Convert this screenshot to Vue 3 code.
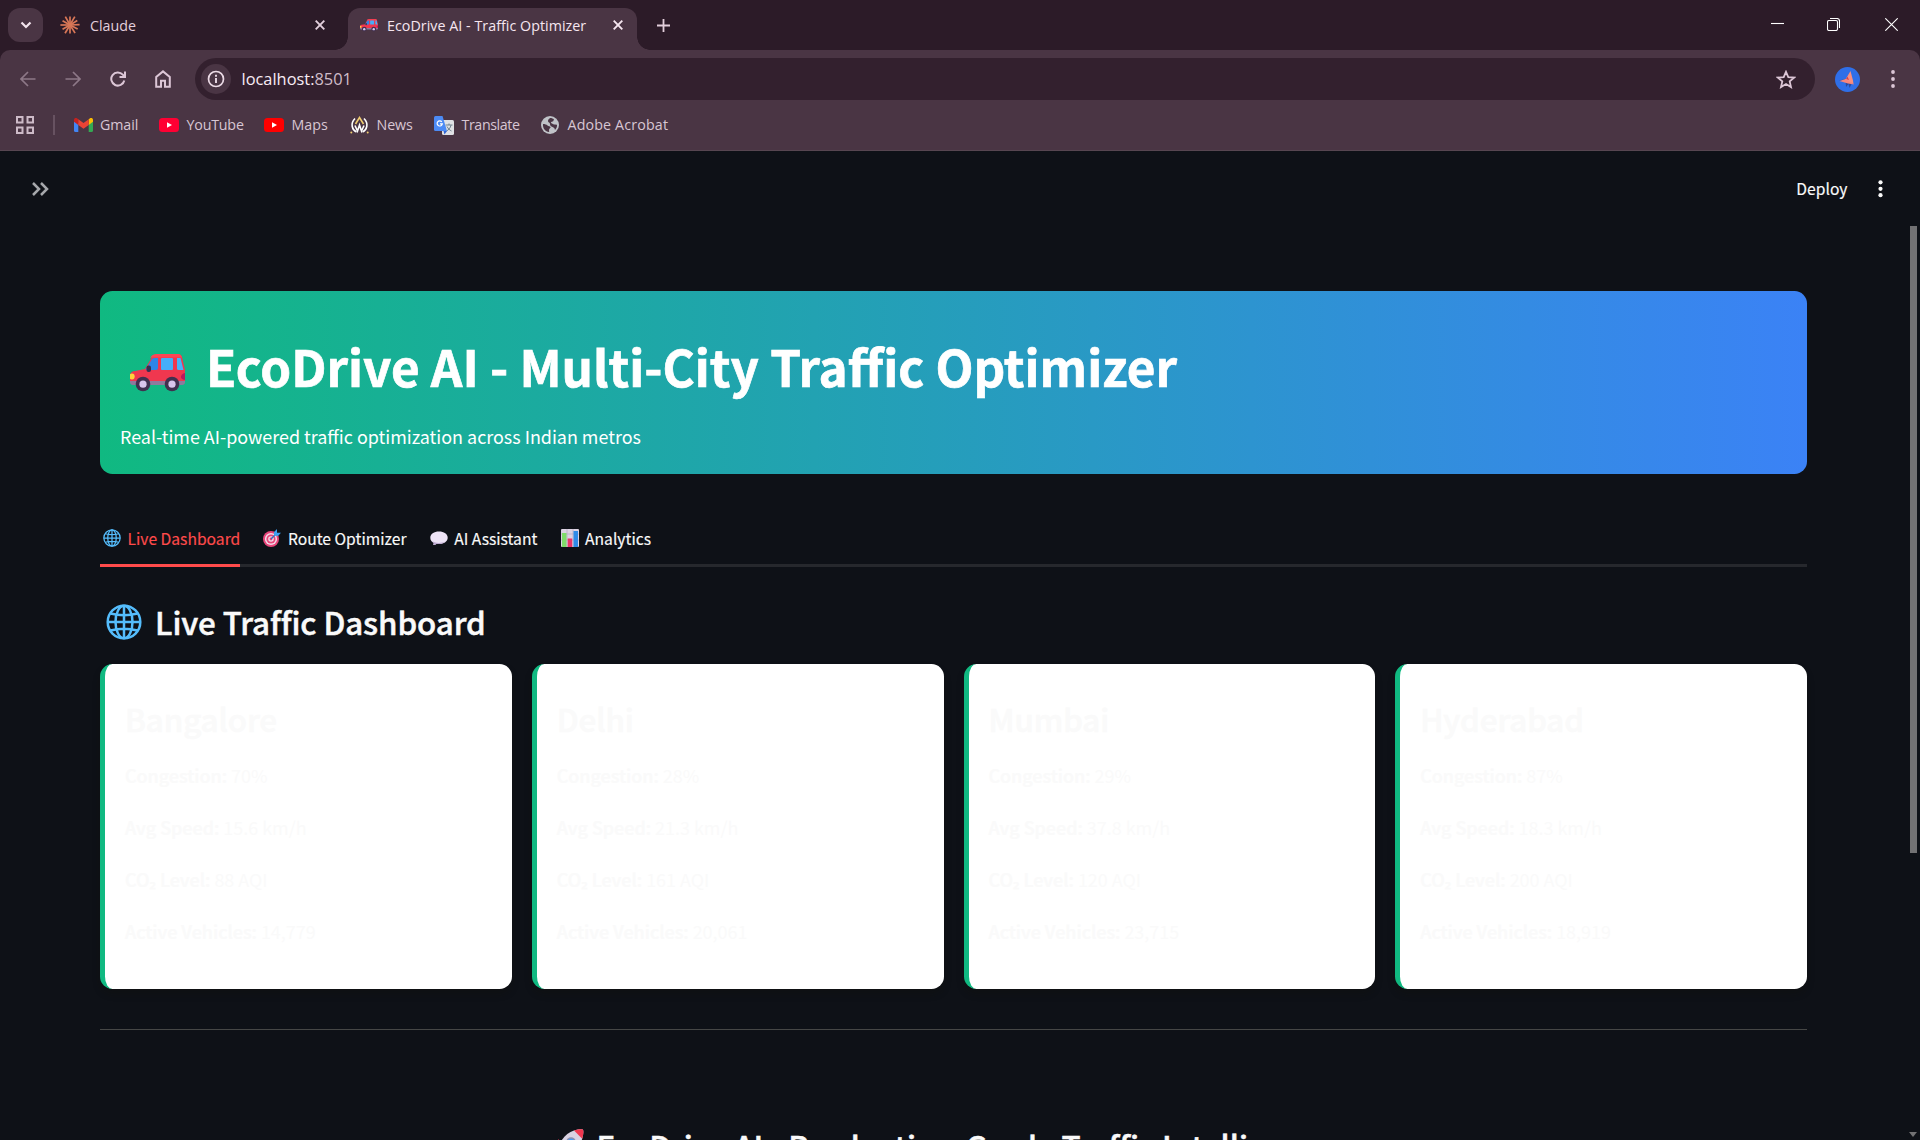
<script setup>
import { h } from 'vue'

const cities = [
  { name: 'Bangalore', congestion: '70%', speed: '15.6 km/h', co2: '88 AQI', vehicles: '14,779' },
  { name: 'Delhi', congestion: '28%', speed: '21.3 km/h', co2: '161 AQI', vehicles: '20,061' },
  { name: 'Mumbai', congestion: '29%', speed: '37.8 km/h', co2: '120 AQI', vehicles: '23,715' },
  { name: 'Hyderabad', congestion: '87%', speed: '18.3 km/h', co2: '200 AQI', vehicles: '18,919' },
]

// Shared emoji-style glyphs used at several sizes
const CarIcon = () =>
  h('svg', { viewBox: '0 0 55 38' }, [
    h('path', { d: 'M5 17 L15 15 L22 3 Q24 0 28 0 H48 Q51 0 52 3 L55 16 V27 H0 V21 Q1 17 5 17Z', fill: '#f0374f' }),
    h('path', { d: 'M20 4 Q22 0 27 0 H48 Q51 0 52 3.500 H21Z', fill: '#ff4455' }),
    h('path', { d: 'M15.500 16 L22 5 Q23 4 25 4 H28 V14 Q28 16 26 16Z', fill: '#2f86e6' }),
    h('rect', { x: 31, y: 4, width: 12, height: 12, rx: 1, fill: '#45aefa' }),
    h('path', { d: 'M47 4 H50.500 L53.500 16 H48.500 Q47 16 47 14.500Z', fill: '#45b4fa' }),
    h('rect', { x: 16.500, y: 11.500, width: 4.500, height: 6.500, rx: 2, fill: '#35304f' }),
    h('path', { d: 'M0 27 H55 V28 Q55 31 52 31 H3 Q0 31 0 28Z', fill: '#8e7a9d' }),
    h('ellipse', { cx: 2, cy: 22.500, rx: 2.700, ry: 3, fill: '#ffd23c' }),
    h('path', { d: 'M55 19 V26 Q50.500 25 51 22.500 Q51.500 19.500 55 19Z', fill: '#b81a5e' }),
    ...[13, 42].flatMap((cx) => [
      h('circle', { cx, cy: 30, r: 7.300, fill: '#41304f' }),
      h('circle', { cx, cy: 30.200, r: 3.600, fill: '#d9c6ec' }),
    ]),
  ])

const GlobeIcon = () =>
  h('svg', { viewBox: '0 0 36 36', fill: 'none', stroke: '#55bdfc', 'stroke-width': 2.5 }, [
    h('circle', { cx: 18, cy: 18, r: 16.300 }),
    h('ellipse', { cx: 18, cy: 18, rx: 8.500, ry: 16.300 }),
    h('path', { d: 'M18 1.500 V34.500 M1.500 18 H34.500 M4.500 9.500 Q18 13 31.500 9.500 M4.500 26.500 Q18 23 31.500 26.500' }),
  ])

const rays = [0, 30, 58, 88, 117, 148, 180, 211, 240, 270, 300, 331]
</script>

<template>
  <div class="window">
    <header class="tabstrip">
      <button class="tab-search">
        <svg width="12" height="8" viewBox="0 0 12 8"><path d="M1.500 1.500 6 6l4.500-4.500" /></svg>
      </button>
      <div class="tab idle">
        <svg class="claude" viewBox="-10 -10 20 20">
          <path v-for="(r, i) in rays" :key="r" :transform="`rotate(${r})`" :d="i % 2 ? 'M0 0V-9.600' : 'M0 0V-8.600'" />
        </svg>
        <span>Claude</span>
        <svg class="x" viewBox="0 0 10 10"><path d="M.7.7l8.600 8.600M9.300.7.7 9.300" /></svg>
      </div>
      <div class="tab active">
        <CarIcon class="fav-car" />
        <span>EcoDrive AI - Traffic Optimizer</span>
        <svg class="x" viewBox="0 0 10 10"><path d="M.7.7l8.600 8.600M9.300.7.7 9.300" /></svg>
      </div>
      <svg class="plus" viewBox="0 0 13 13"><path d="M6.500 0v13M0 6.500h13" /></svg>
      <div class="controls">
        <svg viewBox="0 0 13 13"><path d="M0 5.500h13" /></svg>
        <svg viewBox="0 0 13 13"><rect x=".5" y="2.500" width="10" height="10" rx="1.500" /><path d="M3 .5h7a2.500 2.500 0 0 1 2.500 2.500v7" /></svg>
        <svg viewBox="0 0 13 13"><path d="M.3.3l12.400 12.400M12.700.3.3 12.700" /></svg>
      </div>
    </header>

    <div class="chrome">
      <div class="toolbar">
        <svg class="nav dim" viewBox="0 0 16 16"><path d="M15.500 8H1.500M8 1 1 8l7 7" /></svg>
        <svg class="nav dim" viewBox="0 0 16 16"><path d="M.5 8h14M8 1l7 7-7 7" /></svg>
        <svg class="nav" viewBox="0 0 16 16"><path d="M14.300 9.500A6.600 6.600 0 1 1 12.800 3.600L14.500 5.600M15 .6v5.400H9.500" /></svg>
        <svg class="nav home" viewBox="0 0 16 18"><path d="M1.200 16.800V7L8 1.400 14.800 7v9.800H10v-6H6v6z" /></svg>
        <div class="omnibox">
          <div class="info">
            <svg width="18" height="18" viewBox="0 0 18 18"><circle cx="9" cy="9" r="7.500" /><path d="M9 8v5M9 4.800v1.900" /></svg>
          </div>
          <span class="url"><b>localhost:</b>8501</span>
          <svg class="star" viewBox="0 0 20 19"><path d="M10 1.800l2.300 5.300 5.800.5-4.400 3.800 1.300 5.700-5-3-5 3 1.300-5.700L1.900 7.600l5.800-.5z" /></svg>
        </div>
        <svg class="avatar" viewBox="0 0 25 25">
          <circle cx="12.500" cy="12.500" r="12.500" fill="#2f6fe8" />
          <path d="M4 13.500 10.500 12 11 20 13.500 17 14.500 21 17 16z" fill="#2c4a9c" />
          <path d="M4.500 14 12 11.500 19 17.500 13 16.500z" fill="#f7857a" />
          <path d="M15.500 4 18 13.500 18.500 17 10.500 12.500z" fill="#f88f80" />
          <path d="M12.500 9.500 14 13 11 12z" fill="#d3404e" />
        </svg>
        <svg class="dots" viewBox="0 0 4 18"><circle cx="2" cy="2" r="1.900" /><circle cx="2" cy="9" r="1.900" /><circle cx="2" cy="16" r="1.900" /></svg>
      </div>

      <nav class="bookmarks">
        <svg class="apps" viewBox="0 0 18 18"><path d="M1 1h5.500v5.500H1zM11.500 1H17v5.500h-5.500zM1 11.500h5.500V17H1zM11.500 11.500H17V17h-5.500z" /></svg>
        <i class="sep"></i>
        <a class="bm gmail">
          <svg width="19" height="14" viewBox="0 0 19 14">
            <path d="M0 2v10.500Q0 14 1.500 14H4.300V5z" fill="#4285f4" /><path d="M19 2v10.500q0 1.500-1.500 1.500h-2.800V5z" fill="#34a853" />
            <path d="M14.700 1.200V7L19 3.800V2c0-2-2-2.500-3.300-1.500z" fill="#fbbc04" /><path d="M0 2v1.800L4.300 7V1.200L3.300.5C2-.5 0 0 0 2z" fill="#c5221f" />
            <path d="M4.300 1.200 9.500 5l5.200-3.800V7L9.500 10.800 4.300 7z" fill="#ea4335" />
          </svg><span>Gmail</span>
        </a>
        <a class="bm youtube">
          <svg width="20" height="14" viewBox="0 0 20 14"><rect width="20" height="14" rx="3.500" fill="#ff0033" /><path d="M8 4.200v5.600L13 7z" fill="#fff" /></svg><span>YouTube</span>
        </a>
        <a class="bm maps">
          <svg width="20" height="14" viewBox="0 0 20 14"><rect width="20" height="14" rx="3.500" fill="#ff0000" /><path d="M8 4.200v5.600L13 7z" fill="#fff" /></svg><span>Maps</span>
        </a>
        <a class="bm news">
          <svg width="19" height="18" viewBox="0 0 19 18" fill="none" stroke-width="1.600">
            <path d="M5 2.500C0 7.500 2 14 6.500 16M14 2.500C19 7.500 17 14 12.500 16" stroke="#fff" />
            <path d="M5 9.500l2.500 5.500L9.500 9l2 6L14 9.500" stroke="#fff" /><path d="M5.500 8 9.500 1.500l4 6.500" stroke="#f0cc70" />
            <circle cx="1.300" cy="16.500" r="1" fill="#f0cc70" /><circle cx="17.700" cy="16.500" r="1" fill="#f0cc70" />
          </svg><span>News</span>
        </a>
        <a class="bm translate">
          <svg width="20" height="19" viewBox="0 0 20 19">
            <rect x="8" y="4" width="12" height="15" rx="1.500" fill="#dfe1e5" />
            <path d="M11.500 9h7M15 7.500V9M17 9c-.5 3-2.500 5-4.500 6M13 10.500c1 2 2.500 3.500 4.500 4.500" fill="none" stroke="#71838f" />
            <path d="M1.500 0H8.500L13 15H1.500Q0 15 0 13.500V1.500Q0 0 1.500 0z" fill="#4c8bf5" /><path d="M9.500 15H13l-2.500 3.500z" fill="#3367d6" />
            <path d="M7.800 5.800A2.600 2.600 0 1 0 8.300 7.800H6" fill="none" stroke="#fff" stroke-width="1.200" />
          </svg><span>Translate</span>
        </a>
        <a class="bm adobe">
          <svg width="18" height="18" viewBox="0 0 18 18">
            <circle cx="9" cy="9" r="9" fill="#c0c3c8" />
            <path d="M2 8c2 0 3.500.5 4.500 1.500S9 10 9.500 11s-1.500 1.500-1.500 3 .5 1.500 0 2C4.500 15.500 1.500 12.500 2 8zM9 2c2 0 3 .5 4 1.500l-1 2c-1.500 0-2 .5-2 1.500l3 1.500c1.500 0 2.500.5 3 0 .3 2-.5 4-2 5.500-.5-2-1-2.500-2.500-3S9 9.500 9 8 7 6.500 7 5s1-2 2-3z" fill="#4a3544" />
          </svg><span>Adobe Acrobat</span>
        </a>
      </nav>
    </div>

    <div class="app">
      <div class="app-header">
        <svg class="expand" viewBox="0 0 18 14"><path d="M2 1l6 6-6 6M10 1l6 6-6 6" /></svg>
        <span class="deploy">Deploy</span>
        <svg class="kebab" viewBox="0 0 5 18"><circle cx="2.500" cy="2.300" r="2.100" /><circle cx="2.500" cy="8.800" r="2.100" /><circle cx="2.500" cy="15.200" r="2.100" /></svg>
      </div>

      <main>
        <section class="banner">
          <h1><CarIcon class="big-car" /><span>EcoDrive AI - Multi-City Traffic Optimizer</span></h1>
          <p>Real-time AI-powered traffic optimization across Indian metros</p>
        </section>

        <div class="tabs">
          <div class="item on"><GlobeIcon class="emo" /><span>Live Dashboard</span></div>
          <div class="item">
            <svg class="emo" viewBox="0 0 18 18">
              <circle cx="8" cy="10" r="8" fill="#e8457a" /><circle cx="8" cy="10" r="6.100" fill="#f3dbe8" /><circle cx="8" cy="10" r="4.600" fill="#e8457a" /><circle cx="8" cy="10" r="2.800" fill="#f3dbe8" /><circle cx="8" cy="10" r="1.400" fill="#e8457a" />
              <path d="M8 10l5-5" stroke="#2b6fc0" stroke-width="1.300" /><path d="M11 6.500V3l3-3v3.800H18L15 7z" fill="#3b9ff0" />
            </svg><span>Route Optimizer</span>
          </div>
          <div class="item">
            <svg class="emo" viewBox="0 0 18 18"><path d="M9 2.500c5 0 8.700 2.500 8.700 6.200S14 15 9 15c-.8 0-1.600 0-2.300-.2C5.800 15.800 4.500 16 3.200 16c.5-.6.6-1.500.4-2.200C1.600 12.800.3 11 .3 8.700.3 5 4 2.500 9 2.500z" fill="#eee4f6" /><path d="M1.500 11.500C4 14 10 15 15.500 12.500 12 15.500 8 15.200 6.700 14.800 5.800 15.800 4.500 16 3.200 16c.5-.6.6-1.500.4-2.200z" fill="#bca8cf" /></svg>
            <span>AI Assistant</span>
          </div>
          <div class="item">
            <svg class="emo" viewBox="0 0 18 18"><rect width="18" height="18" rx="1" fill="#dcd3e3" /><path d="M6 0v18M12 0v18M0 5h18M0 11h18" stroke="#b5a9c0" stroke-width=".7" /><rect x="1" y="4" width="4.500" height="14" fill="#7fdc6a" /><rect x="6.700" y="9.500" width="4.500" height="8.500" fill="#ea3568" /><rect x="12.500" y="2" width="4.500" height="16" fill="#2f8be8" /></svg>
            <span>Analytics</span>
          </div>
        </div>

        <h2><GlobeIcon class="big-globe" /><span>Live Traffic Dashboard</span></h2>

        <div class="cards">
          <article v-for="c in cities" :key="c.name" class="card">
            <h3>{{ c.name }}</h3>
            <p><strong>Congestion:</strong> {{ c.congestion }}</p>
            <p><strong>Avg Speed:</strong> {{ c.speed }}</p>
            <p><strong>CO₂ Level:</strong> {{ c.co2 }}</p>
            <p><strong>Active Vehicles:</strong> {{ c.vehicles }}</p>
          </article>
        </div>

        <hr />

        <h2 class="footer">
          <svg class="rocket" viewBox="0 0 34 34">
            <path d="M9 10 2 17l7 1zM24 25l-7 7-1-7z" fill="#e5304f" />
            <path d="M8 22C9 12 16 4 24 1.500c4-1.200 8-1.500 9-.8.700 1 .4 5-.8 9C29.500 18 22 25 12 26z" fill="#d9d2e2" />
            <path d="M24 1.500c4-1.200 8-1.500 9-.8.700 1 .4 5-.8 9z" fill="#f0374f" />
            <circle cx="21" cy="13" r="4.800" fill="#8c8fb0" /><circle cx="21" cy="13" r="3.300" fill="#459cf2" />
          </svg>
          <span>EcoDrive AI - Production-Grade Traffic Intelligence</span>
        </h2>
      </main>
      <i class="thumb"></i>
      <i class="arrow"></i>
    </div>
  </div>
</template>

<style>
body { margin: 0; background: #0e1117; overflow: hidden; }
</style>

<style scoped>
.window { width: 1920px; height: 1140px; overflow: hidden; display: flex; flex-direction: column; background: #2c1b28; font-family: "Open Sans", "Noto Sans", sans-serif; }
svg { display: block; flex: none; }
span { white-space: nowrap; }

.tabstrip { height: 50px; flex: none; display: flex; box-sizing: border-box; padding-left: 8px; font-size: 14.25px; color: #e3cfdc; }
.tab-search { width: 35px; height: 34px; margin-top: 8px; border: 0; padding: 0; border-radius: 12px; background: #4a3544; display: flex; align-items: center; justify-content: center; }
.tab-search path { fill: none; stroke: #f3e4ee; stroke-width: 2.2; }
.tab { display: flex; align-items: center; box-sizing: border-box; }
.idle { width: 305px; height: 50px; padding-left: 17px; }
.tab span { flex: 1; line-height: 20px; margin-top: 2px; }
.claude { width: 20px; height: 20px; margin-right: 10px; }
.claude path { stroke: #d97757; stroke-width: 1.7; }
.x { width: 10px; height: 10px; }
.x path { stroke: #e3cfdc; stroke-width: 1.9; fill: none; }
.idle .x { margin-right: 23px; }
.active { position: relative; width: 289px; height: 42px; margin-top: 8px; padding: 0 14.500px 8px 12px; border-radius: 12px 12px 0 0; background: #4a3544; color: #f6e6f0; }
.active span { letter-spacing: 0.040px; }
.active .x path { stroke: #f6e6f0; }
.active::before, .active::after { content: ""; position: absolute; bottom: 0; width: 13px; height: 13px; }
.active::before { left: -13px; background: radial-gradient(circle at 0 0, transparent 12.500px, #4a3544 13px); }
.active::after { right: -13px; background: radial-gradient(circle at 100% 0, transparent 12.500px, #4a3544 13px); }
.fav-car { width: 18px; height: 13px; margin-right: 9px; }
.plus { width: 13px; height: 13px; margin: 18.500px 0 0 19.500px; }
.plus path { stroke: #e3cfdc; stroke-width: 1.8; }
.controls { margin-left: auto; display: flex; gap: 43px; padding: 18px 22px 0 0; }
.controls svg { width: 13px; height: 13px; }
.controls svg:nth-child(2) { margin-right: 2px; }
.controls path, .controls rect { fill: none; stroke: #fff; stroke-width: 1.1; }

.chrome { height: 101px; flex: none; box-sizing: border-box; background: #4a3544; border-radius: 10px 10px 0 0; border-bottom: 1px solid #574651; }
.toolbar { height: 58px; display: flex; align-items: center; padding-left: 20px; }
.nav { width: 16px; height: 16px; margin: -1px 29px 0 0; }
.home { height: 18px; margin: 0 24.500px 0 -0.500px; }
.nav path { fill: none; stroke: #dcc6d6; stroke-width: 2; }
.dim path { stroke: #8d7887; stroke-width: 1.7; }
.omnibox { width: 1620px; height: 42px; box-sizing: border-box; border-radius: 21px; background: #33202e; display: flex; align-items: center; padding: 0 19.500px 0 6px; }
.info { width: 30px; height: 30px; border-radius: 50%; background: #4a3544; display: flex; align-items: center; justify-content: center; }
.info circle { fill: none; stroke: #ecdbe6; stroke-width: 1.7; }
.info path { stroke: #ecdbe6; stroke-width: 1.9; }
.url { flex: 1; margin: 0 0 0 10.500px; font-size: 16.4px; line-height: 22px; color: #cfbcc9; }
.url b { font-weight: 400; color: #f8ecf4; }
.star { width: 20px; height: 19px; }
.star path { fill: none; stroke: #dcc6d6; stroke-width: 1.8; }
.avatar { width: 25px; height: 25px; margin-left: 20px; }
.dots { width: 4px; height: 18px; margin-left: 30.500px; fill: #dcc6d6; }

.bookmarks { height: 34px; display: flex; align-items: center; padding-left: 15.500px; font-size: 14.25px; color: #d8c6d3; }
.apps { width: 18px; height: 18px; }
.apps path { fill: none; stroke: #cdbbc8; stroke-width: 2; }
.sep { width: 2px; height: 20px; margin: 0 19px 0 19px; background: #675261; }
.bm { display: flex; align-items: center; gap: 7.500px; box-sizing: border-box; }
.bm span { line-height: 20px; }
.gmail { width: 85.500px; letter-spacing: -0.1px; }
.youtube { width: 105px; letter-spacing: -0.2px; }
.maps { width: 86px; }
.news { width: 84px; letter-spacing: -0.1px; }
.translate { width: 107px; letter-spacing: -0.4px; }
.adobe { letter-spacing: 0.150px; gap: 8.500px; }

.app { position: relative; height: 989px; flex: none; background: #0e1117; color: #fafafa; font-family: "Noto Sans CJK SC", "Noto Sans", sans-serif; }
.app-header { height: 75px; display: flex; align-items: center; }
.expand { width: 18px; height: 14px; margin-left: 31px; }
.expand path { fill: none; stroke: #a6a8ac; stroke-width: 2.5; }
.deploy { margin-left: auto; font-size: 15.650px; line-height: 24px; -webkit-text-stroke: 0.150px currentColor; }
.kebab { width: 5px; height: 18px; margin: 0 37px 0 30.500px; fill: #fafafa; }

main { padding: 65px 113px 0 100px; }
.banner { height: 183px; box-sizing: border-box; border-radius: 12.500px; padding: 42px 20px 0; background: linear-gradient(90deg, #10b981, #3b82f6); color: #fff; }
h1 { margin: 0; height: 66px; display: flex; align-items: center; font-size: 49.350px; font-weight: 700; line-height: 66px; -webkit-text-stroke: 0.700px currentColor; }
.big-car { width: 55px; height: 38px; margin: 14px 21px 0 10px; }
.banner p { margin: 23px 0 0; font-size: 17.920px; line-height: 28px; }

.tabs { margin-top: 40px; height: 50px; display: flex; gap: 20.2px; border-bottom: 3px solid #26282d; font-size: 15.650px; -webkit-text-stroke: 0.150px currentColor; }
.item { display: flex; align-items: center; padding-bottom: 2px; height: 48px; }
.on { color: #ff4b4b; border-bottom: 3px solid #ff4b4b; }
.emo { width: 18px; height: 18px; margin: 0 6.500px 0 3px; }

h2 { margin: 32px 0 20px; height: 45px; display: flex; align-items: center; font-size: 31.3px; font-weight: 500; line-height: 45px; letter-spacing: -0.080px; font-variant-ligatures: common-ligatures; -webkit-text-stroke: 0.500px currentColor; }
.big-globe { width: 36px; height: 36px; margin: 1px 13.500px 0 5.500px; }

.cards { display: grid; grid-template-columns: repeat(4, 1fr); gap: 20px; }
.card { height: 325px; box-sizing: border-box; padding: 31.500px 20px 0; border-left: 5px solid #10b981; border-radius: 12.500px; background: #fff; box-shadow: 0 5px 7.500px rgba(15, 15, 10, 0.3); }
.card h3 { margin: 0 0 7px; font-size: 31.3px; font-weight: 500; line-height: 46px; letter-spacing: -0.080px; -webkit-text-stroke: 0.500px currentColor; }
.card p { margin: 0; font-size: 17.950px; line-height: 52px; }
.card strong { font-weight: 500; -webkit-text-stroke: 0.2px currentColor; }

hr { margin: 40px 0 0; border: 0; height: 1px; background: #464746; }
.footer { margin: 93px 0 0; padding-left: 459.500px; letter-spacing: -0.080px; }
.rocket { width: 34px; height: 34px; margin: 0 13px 0 -10px; }

.thumb { position: absolute; top: 75px; right: 3px; width: 7px; height: 627px; background: #727274; }
.arrow { position: absolute; right: 3px; bottom: 3px; border: 4px solid transparent; border-top: 5px solid #727274; border-bottom: 0; }
</style>
